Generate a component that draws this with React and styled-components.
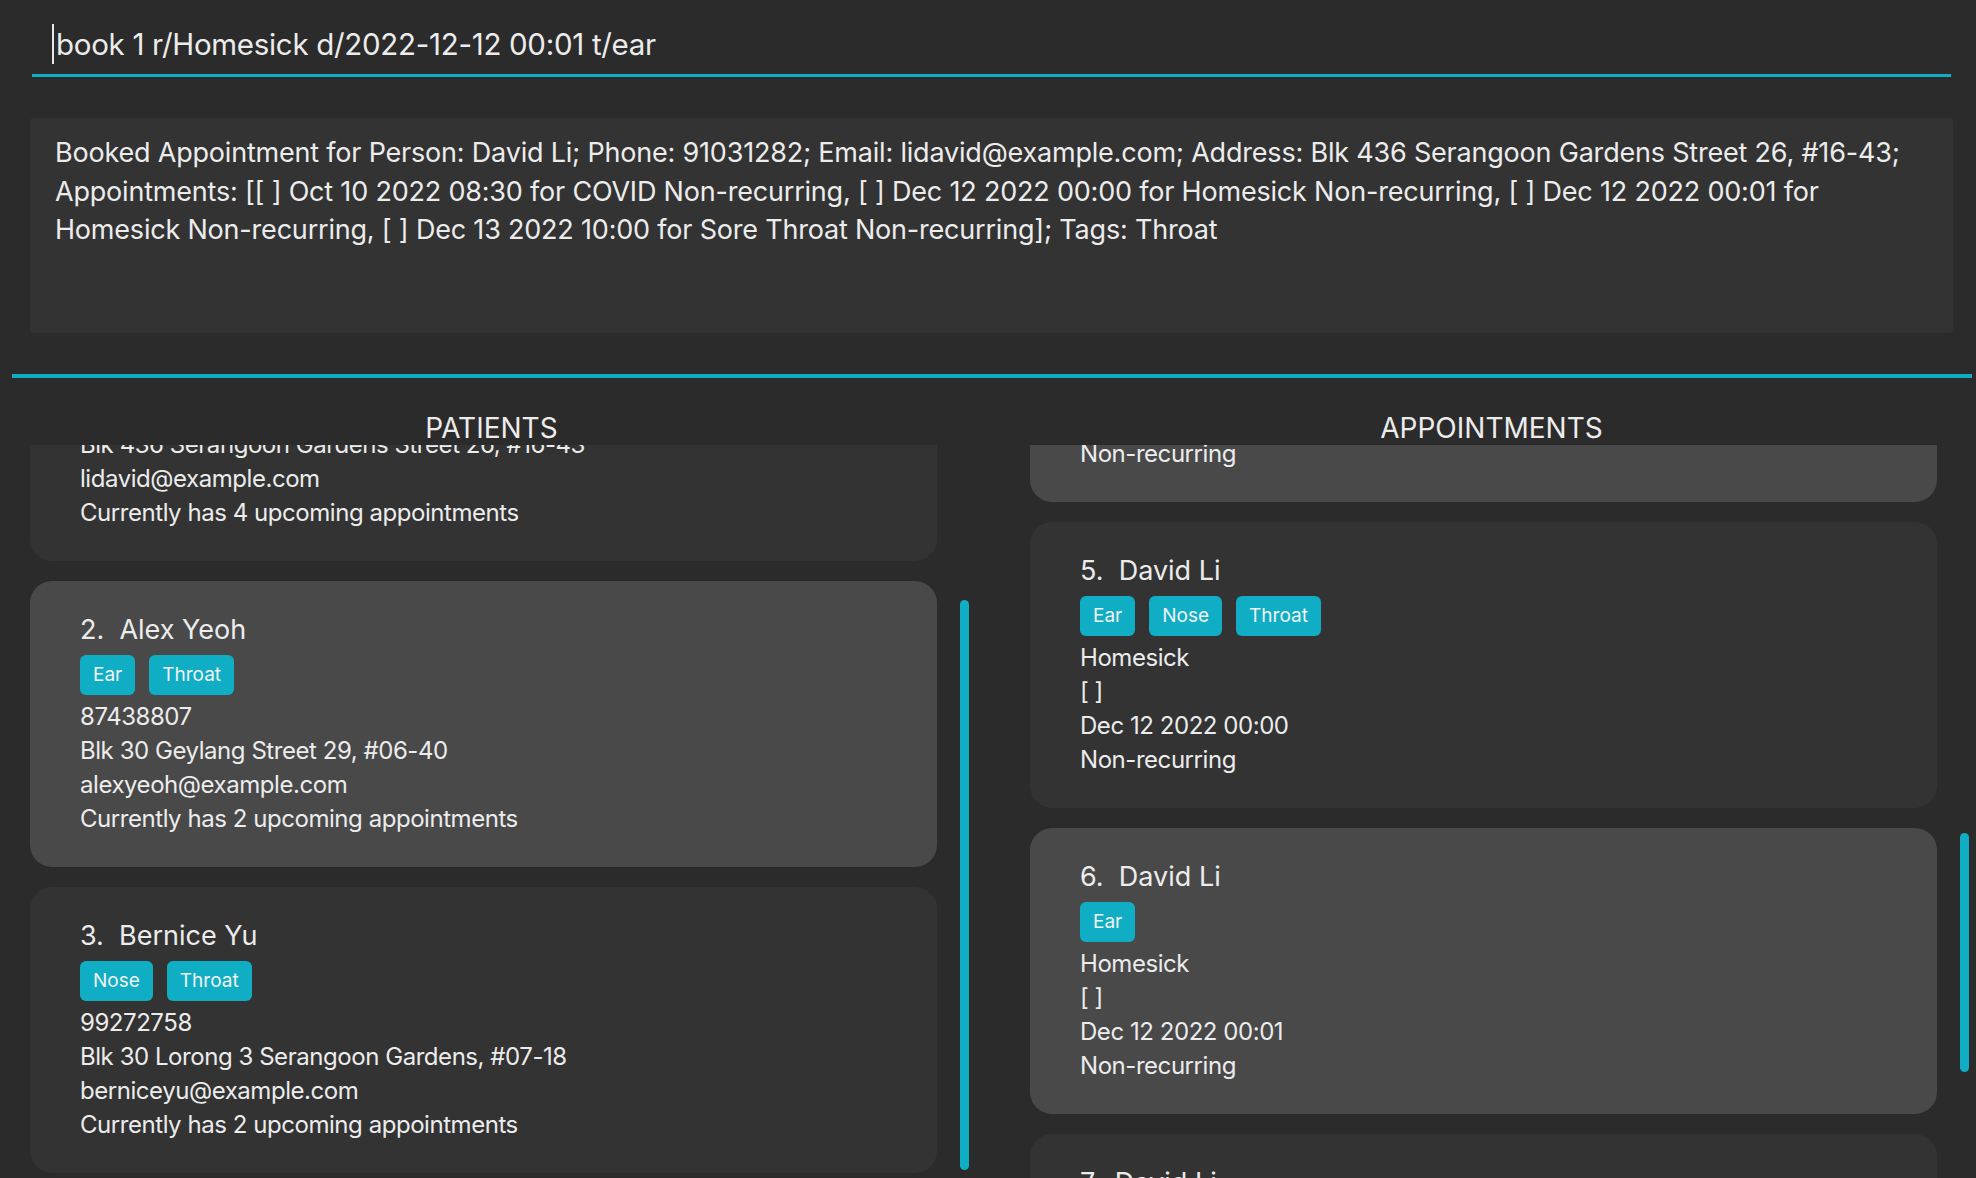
import React, { useLayoutEffect, useRef } from 'react'
import styled, { createGlobalStyle } from 'styled-components'

const CYAN = '#10aec4'

const GlobalStyle = createGlobalStyle`
  * { box-sizing: border-box; }
  html, body { margin: 0; padding: 0; background: #2b2b2b; }
  body {
    font-family: Inter, "Noto Sans", sans-serif;
    color: #ececec;
    overflow: hidden;
  }
`

const patients = [
  { name: 'David Li', tags: ['Throat'], phone: '91031282', address: 'Blk 436 Serangoon Gardens Street 26, #16-43', email: 'lidavid@example.com', count: 4 },
  { name: 'Alex Yeoh', tags: ['Ear', 'Throat'], phone: '87438807', address: 'Blk 30 Geylang Street 29, #06-40', email: 'alexyeoh@example.com', count: 2 },
  { name: 'Bernice Yu', tags: ['Nose', 'Throat'], phone: '99272758', address: 'Blk 30 Lorong 3 Serangoon Gardens, #07-18', email: 'berniceyu@example.com', count: 2 },
  { name: 'Charlotte Oliveiro', tags: ['Nose'], phone: '93210283', address: 'Blk 11 Ang Mo Kio Street 74, #11-04', email: 'charlotte@example.com', count: 0 },
]

const appointments = [
  { name: 'Alex Yeoh', tags: ['Ear'], reason: 'Ear Infection', date: 'Oct 01 2022 09:00' },
  { name: 'Alex Yeoh', tags: ['Throat'], reason: 'Cough', date: 'Nov 05 2022 14:30' },
  { name: 'Bernice Yu', tags: ['Nose'], reason: 'Runny Nose', date: 'Oct 03 2022 11:00' },
  { name: 'David Li', tags: ['Throat'], reason: 'COVID', date: 'Oct 10 2022 08:30' },
  { name: 'David Li', tags: ['Ear', 'Nose', 'Throat'], reason: 'Homesick', date: 'Dec 12 2022 00:00' },
  { name: 'David Li', tags: ['Ear'], reason: 'Homesick', date: 'Dec 12 2022 00:01' },
  { name: 'David Li', tags: ['Throat'], reason: 'Sore Throat', date: 'Dec 13 2022 10:00' },
]

const resultLines = [
  'Booked Appointment for Person: David Li; Phone: 91031282; Email: lidavid@example.com; Address: Blk 436 Serangoon Gardens Street 26, #16-43;',
  'Appointments: [[ ] Oct 10 2022 08:30 for COVID Non-recurring, [ ] Dec 12 2022 00:00 for Homesick Non-recurring, [ ] Dec 12 2022 00:01 for',
  'Homesick Non-recurring, [ ] Dec 13 2022 10:00 for Sore Throat Non-recurring]; Tags: Throat',
]

function ScrollList({ offset, thumbTop, thumbHeight, children }) {
  const ref = useRef(null)
  useLayoutEffect(() => {
    if (ref.current) ref.current.scrollTop = offset
  }, [offset])
  return (
    <>
      <List ref={ref}>{children}</List>
      <Track>
        <Thumb $top={thumbTop} $height={thumbHeight} />
      </Track>
    </>
  )
}

function Card({ index, name, tags, lines }) {
  return (
    <CardBox $light={index % 2 === 1}>
      <Name>{`${index + 1}.  ${name}`}</Name>
      <Tags>
        {tags.map((t) => (
          <Tag key={t}>{t}</Tag>
        ))}
      </Tags>
      <Lines>
        {lines.map((l, i) => (
          <Line key={i}>{l}</Line>
        ))}
      </Lines>
    </CardBox>
  )
}

export default function App() {
  return (
    <Page>
      <GlobalStyle />
      <CommandBar>
        <Caret />
        <CommandText>book 1 r/Homesick d/2022-12-12 00:01 t/ear</CommandText>
      </CommandBar>

      <ResultBox>
        {resultLines.map((l, i) => (
          <div key={i}>{l}</div>
        ))}
      </ResultBox>

      <Divider />

      <Panels>
        <Panel>
          <PanelTitle>PATIENTS</PanelTitle>
          <ScrollList offset={170} thumbTop={155} thumbHeight={570}>
            {patients.map((p, i) => (
              <Card
                key={i}
                index={i}
                name={p.name}
                tags={p.tags}
                lines={[p.phone, p.address, p.email, `Currently has ${p.count} upcoming appointments`]}
              />
            ))}
          </ScrollList>
        </Panel>

        <Panel>
          <PanelTitle>APPOINTMENTS</PanelTitle>
          <ScrollList offset={1147} thumbTop={388} thumbHeight={239}>
            {appointments.map((a, i) => (
              <Card
                key={i}
                index={i}
                name={a.name}
                tags={a.tags}
                lines={[a.reason, '[ ]', a.date, 'Non-recurring']}
              />
            ))}
          </ScrollList>
        </Panel>
      </Panels>
    </Page>
  )
}

const Page = styled.div`
  width: 100vw;
  height: 100vh;
  display: flex;
  flex-direction: column;
  background: #2b2b2b;
`

const CommandBar = styled.div`
  display: flex;
  align-items: center;
  margin: 0 25px 0 32px;
  padding: 24px 0 10px 20px;
  border-bottom: 3.5px solid ${CYAN};
`

const Caret = styled.span`
  display: inline-block;
  width: 2px;
  height: 40px;
  background: #e6e6e6;
  margin-right: 2px;
`

const CommandText = styled.span`
  font-size: 29.5px;
  line-height: 40px;
  letter-spacing: -0.3px;
  color: #ececec;
  white-space: pre;
`

const ResultBox = styled.div`
  margin: 41px 23px 0 30px;
  height: 215px;
  padding: 16px 25px 0;
  background: #333333;
  border-radius: 4px;
  font-size: 27px;
  line-height: 38.5px;
  letter-spacing: -0.2px;
  white-space: nowrap;
`

const Divider = styled.div`
  margin: 41px 4px 0 12px;
  height: 3.5px;
  background: ${CYAN};
`

const Panels = styled.div`
  flex: 1;
  min-height: 0;
  display: grid;
  grid-template-columns: 939px 939px;
  column-gap: 61px;
  padding-left: 30px;
`

const Panel = styled.section`
  min-height: 0;
  display: grid;
  grid-template-columns: 907px 9px;
  grid-template-rows: 67px 1fr;
  column-gap: 23px;
`

const PanelTitle = styled.h2`
  grid-column: 1 / -1;
  margin: 0;
  padding: 33px 16px 0 0;
  text-align: center;
  font-size: 28px;
  line-height: 34px;
  font-weight: 400;
  color: #ececec;
`

const List = styled.div`
  min-height: 0;
  overflow: hidden;
  display: flex;
  flex-direction: column;
  gap: 20px;
`

const Track = styled.div`
  min-height: 0;
`

const Thumb = styled.div`
  width: 9px;
  margin-top: ${(p) => p.$top}px;
  height: ${(p) => p.$height}px;
  border-radius: 5px;
  background: ${CYAN};
`

const CardBox = styled.article`
  flex-shrink: 0;
  height: 286px;
  padding: 31px 50px 0 50px;
  border-radius: 22px;
  background: ${(p) => (p.$light ? '#494949' : '#333333')};
`

const Name = styled.div`
  font-size: 27px;
  line-height: 36px;
  white-space: pre;
  color: #ececec;
`

const Tags = styled.div`
  display: flex;
  gap: 14px;
  margin-top: 7px;
`

const Tag = styled.span`
  height: 40px;
  padding: 0 13px;
  display: flex;
  align-items: center;
  border-radius: 6px;
  background: ${CYAN};
  color: #f2f2f2;
  font-size: 19px;
`

const Lines = styled.div`
  margin-top: 5px;
`

const Line = styled.div`
  font-size: 24px;
  line-height: 34px;
  letter-spacing: -0.45px;
  color: #ececec;
  white-space: nowrap;
`
